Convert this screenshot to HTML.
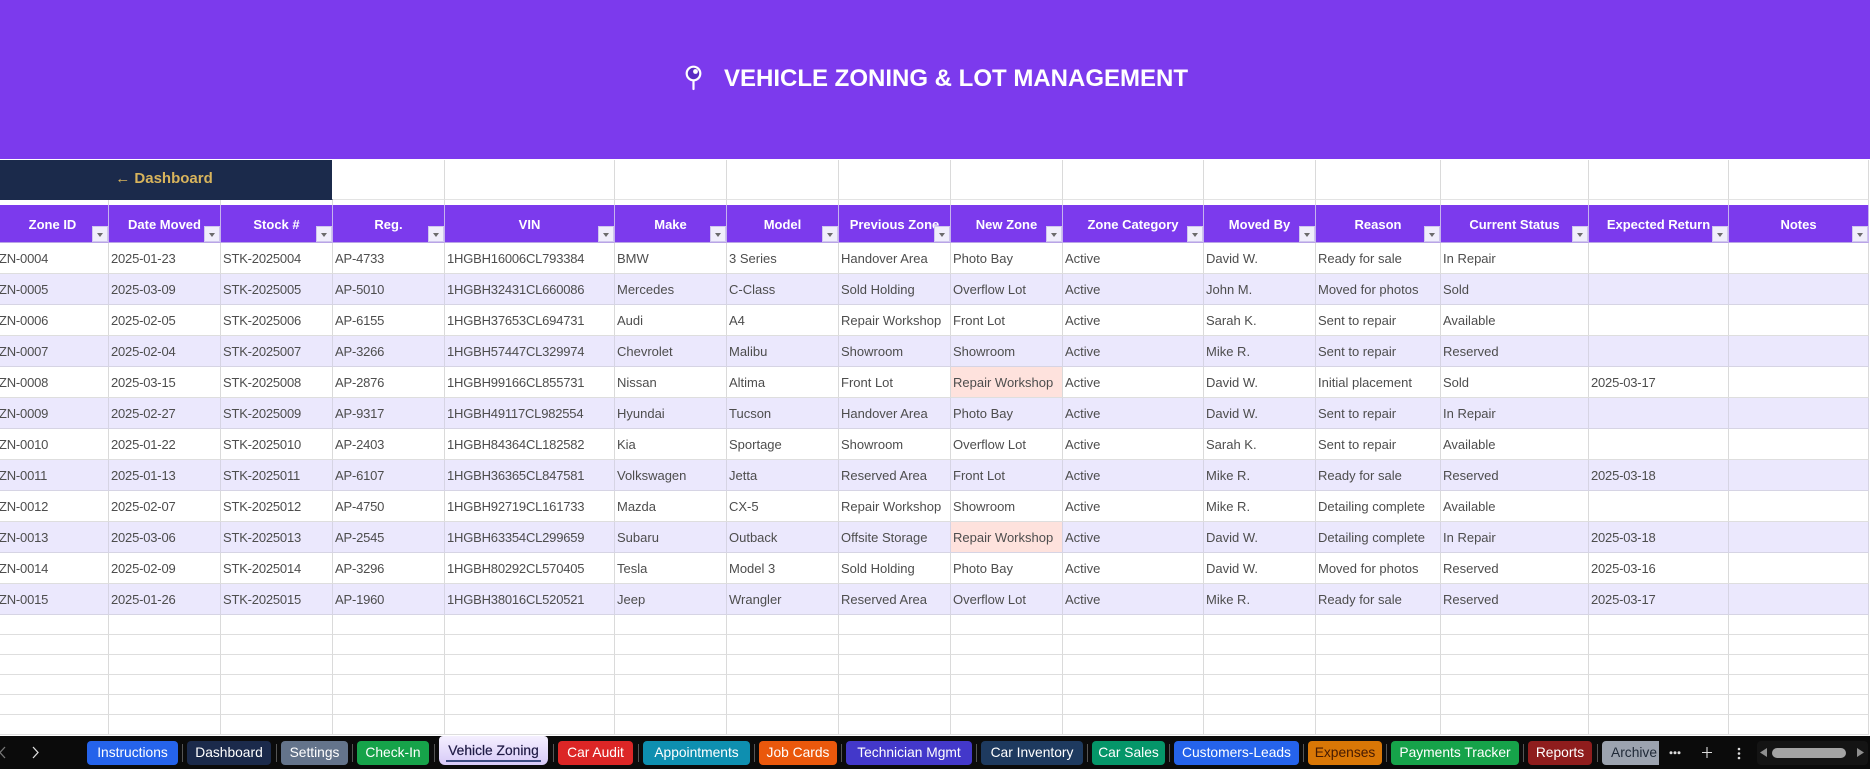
<!DOCTYPE html>
<html><head><meta charset="utf-8"><title>Vehicle Zoning</title>
<style>
*{box-sizing:border-box}
html,body{margin:0;padding:0;width:1870px;height:769px;overflow:hidden;background:#fff;font-family:"Liberation Sans",Arial,sans-serif}
.banner{position:absolute;left:0;top:0;width:1870px;height:159px;background:#7c3aed}
.title{position:absolute;left:724px;top:63px;font-size:24px;line-height:32px;font-weight:bold;color:#fff;white-space:nowrap}
.pin{position:absolute;left:682px;top:62px}
table{position:absolute;left:-3px;top:159px;border-collapse:separate;border-spacing:0;table-layout:fixed;width:1872px}
td,th{padding:0 2px;border-right:1px solid #dadada;border-bottom:1px solid #dedede;overflow:hidden;white-space:nowrap;font-weight:normal}
td{font-size:13px;color:#4d4d4d;background:#fff}
td:nth-child(-n+5),td:nth-child(14){letter-spacing:-.2px}
tr.r0{height:1px}
tr.r0 td{border:0;background:#fff;font-size:0;padding:0}
tr.r1{height:40px}
tr.r1 td{border-bottom:1px solid #e3e3e3;letter-spacing:0}
tr.r1 td.dash{background:#1b2a4b;color:#d8b45c;font-size:15px;font-weight:bold;text-align:center;border:0;padding:0 1px 2px 0;border-right:1px solid #fff;border-bottom:1px solid #1b2a4b}
tr.r2{height:5px}
tr.r2 td{font-size:0;padding:0;border-bottom:0}
tr.h{height:38px}
th{position:relative;background:#7c3aed;color:#fff;font-size:13px;font-weight:bold;text-align:center;border-right:1px solid #c6b3ee;border-bottom:1px solid #b9a4e6;padding:1px 0 0}
th i{position:absolute;right:0;bottom:0;width:16px;height:16px;background:#f0eefb;border:1px solid #cfc6ee}
th i:after{content:"";position:absolute;left:4px;top:6px;border-left:3.5px solid transparent;border-right:3.5px solid transparent;border-top:4px solid #6b6b6b}
tr.d{height:31px}
tr.alt td{background:#ebe8fd;border-bottom-color:#d6d4e4;border-right-color:#d6d4e4}
td.red,tr.alt td.red{background:#fee2dd}
tr.e{height:20px}
.bar{position:absolute;left:0;top:736px;width:1870px;height:33px;background:#0b0b0b}
.tab{position:absolute;top:5px;height:24px;border-radius:4px;color:#fff;font-size:13.8px;line-height:24px;text-align:center;white-space:nowrap;overflow:hidden}
.sep{position:absolute;top:8px;width:1px;height:18px;background:#555}
.active{position:absolute;left:439px;top:0;width:109px;height:29px;background:linear-gradient(#f5f0ff,#d6c9f7);border-radius:4px 4px 6px 6px;color:#1f1a45;font-size:13.8px;line-height:29px;text-align:center;-webkit-text-stroke:.2px #1f1a45}
.uline{position:absolute;left:446px;top:760px;width:95px;height:2px;background:#3b4a80}
.bar svg{position:absolute;left:0;top:0}
</style></head>
<body>
<div class="banner"></div>
<svg class="pin" width="24" height="30" viewBox="0 0 24 30"><circle cx="11.500" cy="11.500" r="6.800" fill="#5b2bc4" stroke="#fff" stroke-width="2.200"/><circle cx="13.500" cy="9.500" r="2.400" fill="#fff"/><path d="M11.500 19V27" stroke="#fff" stroke-width="2.200" stroke-linecap="round"/></svg>
<div class="title">VEHICLE ZONING &amp; LOT MANAGEMENT</div>
<table>
<colgroup><col style="width:112px"><col style="width:112px"><col style="width:112px"><col style="width:112px"><col style="width:170px"><col style="width:112px"><col style="width:112px"><col style="width:112px"><col style="width:112px"><col style="width:141px"><col style="width:112px"><col style="width:125px"><col style="width:148px"><col style="width:140px"><col style="width:140px"></colgroup>
<tr class="r0"><td colspan="15"></td></tr>
<tr class="r1"><td class="dash" colspan="3">&#8592; Dashboard</td><td></td><td></td><td></td><td></td><td></td><td></td><td></td><td></td><td></td><td></td><td></td><td></td></tr>
<tr class="r2"><td></td><td></td><td></td><td></td><td></td><td></td><td></td><td></td><td></td><td></td><td></td><td></td><td></td><td></td><td></td></tr>
<tr class="h"><th>Zone ID<i></i></th><th>Date Moved<i></i></th><th>Stock #<i></i></th><th>Reg.<i></i></th><th>VIN<i></i></th><th>Make<i></i></th><th>Model<i></i></th><th>Previous Zone<i></i></th><th>New Zone<i></i></th><th>Zone Category<i></i></th><th>Moved By<i></i></th><th>Reason<i></i></th><th>Current Status<i></i></th><th>Expected Return<i></i></th><th>Notes<i></i></th></tr>
<tr class="d"><td>ZN-0004</td><td>2025-01-23</td><td>STK-2025004</td><td>AP-4733</td><td>1HGBH16006CL793384</td><td>BMW</td><td>3 Series</td><td>Handover Area</td><td>Photo Bay</td><td>Active</td><td>David W.</td><td>Ready for sale</td><td>In Repair</td><td></td><td></td></tr>
<tr class="d alt"><td>ZN-0005</td><td>2025-03-09</td><td>STK-2025005</td><td>AP-5010</td><td>1HGBH32431CL660086</td><td>Mercedes</td><td>C-Class</td><td>Sold Holding</td><td>Overflow Lot</td><td>Active</td><td>John M.</td><td>Moved for photos</td><td>Sold</td><td></td><td></td></tr>
<tr class="d"><td>ZN-0006</td><td>2025-02-05</td><td>STK-2025006</td><td>AP-6155</td><td>1HGBH37653CL694731</td><td>Audi</td><td>A4</td><td>Repair Workshop</td><td>Front Lot</td><td>Active</td><td>Sarah K.</td><td>Sent to repair</td><td>Available</td><td></td><td></td></tr>
<tr class="d alt"><td>ZN-0007</td><td>2025-02-04</td><td>STK-2025007</td><td>AP-3266</td><td>1HGBH57447CL329974</td><td>Chevrolet</td><td>Malibu</td><td>Showroom</td><td>Showroom</td><td>Active</td><td>Mike R.</td><td>Sent to repair</td><td>Reserved</td><td></td><td></td></tr>
<tr class="d"><td>ZN-0008</td><td>2025-03-15</td><td>STK-2025008</td><td>AP-2876</td><td>1HGBH99166CL855731</td><td>Nissan</td><td>Altima</td><td>Front Lot</td><td class="red">Repair Workshop</td><td>Active</td><td>David W.</td><td>Initial placement</td><td>Sold</td><td>2025-03-17</td><td></td></tr>
<tr class="d alt"><td>ZN-0009</td><td>2025-02-27</td><td>STK-2025009</td><td>AP-9317</td><td>1HGBH49117CL982554</td><td>Hyundai</td><td>Tucson</td><td>Handover Area</td><td>Photo Bay</td><td>Active</td><td>David W.</td><td>Sent to repair</td><td>In Repair</td><td></td><td></td></tr>
<tr class="d"><td>ZN-0010</td><td>2025-01-22</td><td>STK-2025010</td><td>AP-2403</td><td>1HGBH84364CL182582</td><td>Kia</td><td>Sportage</td><td>Showroom</td><td>Overflow Lot</td><td>Active</td><td>Sarah K.</td><td>Sent to repair</td><td>Available</td><td></td><td></td></tr>
<tr class="d alt"><td>ZN-0011</td><td>2025-01-13</td><td>STK-2025011</td><td>AP-6107</td><td>1HGBH36365CL847581</td><td>Volkswagen</td><td>Jetta</td><td>Reserved Area</td><td>Front Lot</td><td>Active</td><td>Mike R.</td><td>Ready for sale</td><td>Reserved</td><td>2025-03-18</td><td></td></tr>
<tr class="d"><td>ZN-0012</td><td>2025-02-07</td><td>STK-2025012</td><td>AP-4750</td><td>1HGBH92719CL161733</td><td>Mazda</td><td>CX-5</td><td>Repair Workshop</td><td>Showroom</td><td>Active</td><td>Mike R.</td><td>Detailing complete</td><td>Available</td><td></td><td></td></tr>
<tr class="d alt"><td>ZN-0013</td><td>2025-03-06</td><td>STK-2025013</td><td>AP-2545</td><td>1HGBH63354CL299659</td><td>Subaru</td><td>Outback</td><td>Offsite Storage</td><td class="red">Repair Workshop</td><td>Active</td><td>David W.</td><td>Detailing complete</td><td>In Repair</td><td>2025-03-18</td><td></td></tr>
<tr class="d"><td>ZN-0014</td><td>2025-02-09</td><td>STK-2025014</td><td>AP-3296</td><td>1HGBH80292CL570405</td><td>Tesla</td><td>Model 3</td><td>Sold Holding</td><td>Photo Bay</td><td>Active</td><td>David W.</td><td>Moved for photos</td><td>Reserved</td><td>2025-03-16</td><td></td></tr>
<tr class="d alt"><td>ZN-0015</td><td>2025-01-26</td><td>STK-2025015</td><td>AP-1960</td><td>1HGBH38016CL520521</td><td>Jeep</td><td>Wrangler</td><td>Reserved Area</td><td>Overflow Lot</td><td>Active</td><td>Mike R.</td><td>Ready for sale</td><td>Reserved</td><td>2025-03-17</td><td></td></tr>
<tr class="e"><td></td><td></td><td></td><td></td><td></td><td></td><td></td><td></td><td></td><td></td><td></td><td></td><td></td><td></td><td></td></tr>
<tr class="e"><td></td><td></td><td></td><td></td><td></td><td></td><td></td><td></td><td></td><td></td><td></td><td></td><td></td><td></td><td></td></tr>
<tr class="e"><td></td><td></td><td></td><td></td><td></td><td></td><td></td><td></td><td></td><td></td><td></td><td></td><td></td><td></td><td></td></tr>
<tr class="e"><td></td><td></td><td></td><td></td><td></td><td></td><td></td><td></td><td></td><td></td><td></td><td></td><td></td><td></td><td></td></tr>
<tr class="e"><td></td><td></td><td></td><td></td><td></td><td></td><td></td><td></td><td></td><td></td><td></td><td></td><td></td><td></td><td></td></tr>
<tr class="e"><td></td><td></td><td></td><td></td><td></td><td></td><td></td><td></td><td></td><td></td><td></td><td></td><td></td><td></td><td></td></tr>
</table>
<div class="bar">
<svg width="1870" height="33" viewBox="0 0 1870 33" fill="none">
<path d="M5 11L0 16.500L5 22" stroke="#777" stroke-width="1.300"/>
<path d="M33 11L38 16.500L33 22" stroke="#ddd" stroke-width="1.300"/>
<circle cx="1671" cy="16.700" r="1.500" fill="#ddd"/><circle cx="1675" cy="16.700" r="1.500" fill="#ddd"/><circle cx="1679" cy="16.700" r="1.500" fill="#ddd"/>
<path d="M1707 11V22M1702 16.500H1712" stroke="#ddd" stroke-width="1.100"/>
<circle cx="1739" cy="13" r="1.300" fill="#ddd"/><circle cx="1739" cy="17.500" r="1.300" fill="#ddd"/><circle cx="1739" cy="22" r="1.300" fill="#ddd"/>
<rect x="1757" y="5" width="111" height="24" rx="4" fill="#141414"/>
<path d="M1767 12V21L1760 16.500Z" fill="#8f8f8f"/>
<rect x="1772" y="12" width="74" height="10" rx="5" fill="#a3a3a3"/>
<path d="M1857 12V21L1864 16.500Z" fill="#8f8f8f"/>
</svg>
<div class="tab" style="left:87px;width:91px;background:#2563eb">Instructions</div><div class="sep" style="left:182px"></div>
<div class="tab" style="left:187px;width:84px;background:#1b2a4b">Dashboard</div><div class="sep" style="left:276px"></div>
<div class="tab" style="left:281px;width:67px;background:#64748b">Settings</div><div class="sep" style="left:352px"></div>
<div class="tab" style="left:357px;width:72px;background:#16a34a">Check-In</div><div class="sep" style="left:434px"></div>
<div class="active">Vehicle Zoning</div><div class="sep" style="left:553px"></div>
<div class="tab" style="left:558px;width:75px;background:#dc2626">Car Audit</div><div class="sep" style="left:638px"></div>
<div class="tab" style="left:643px;width:107px;background:#0e8fb0">Appointments</div><div class="sep" style="left:754px"></div>
<div class="tab" style="left:759px;width:78px;background:#ea580c">Job Cards</div><div class="sep" style="left:841px"></div>
<div class="tab" style="left:846px;width:126px;background:#4338ca">Technician Mgmt</div><div class="sep" style="left:976px"></div>
<div class="tab" style="left:981px;width:102px;background:#1e3a5f">Car Inventory</div><div class="sep" style="left:1087px"></div>
<div class="tab" style="left:1092px;width:73px;background:#059669">Car Sales</div><div class="sep" style="left:1169px"></div>
<div class="tab" style="left:1174px;width:125px;background:#2563eb">Customers-Leads</div><div class="sep" style="left:1303px"></div>
<div class="tab" style="left:1308px;width:74px;background:#d97706;color:#451a03">Expenses</div><div class="sep" style="left:1386px"></div>
<div class="tab" style="left:1391px;width:128px;background:#16a34a">Payments Tracker</div><div class="sep" style="left:1523px"></div>
<div class="tab" style="left:1528px;width:64px;background:#8f1d1d">Reports</div><div class="sep" style="left:1597px"></div>
<div class="tab" style="left:1602px;width:57px;background:#9ca3af;color:#1f2937;border-radius:4px 0 0 4px;text-align:left;padding-left:9px">Archive</div>
</div>
<div class="uline"></div>
</body></html>
